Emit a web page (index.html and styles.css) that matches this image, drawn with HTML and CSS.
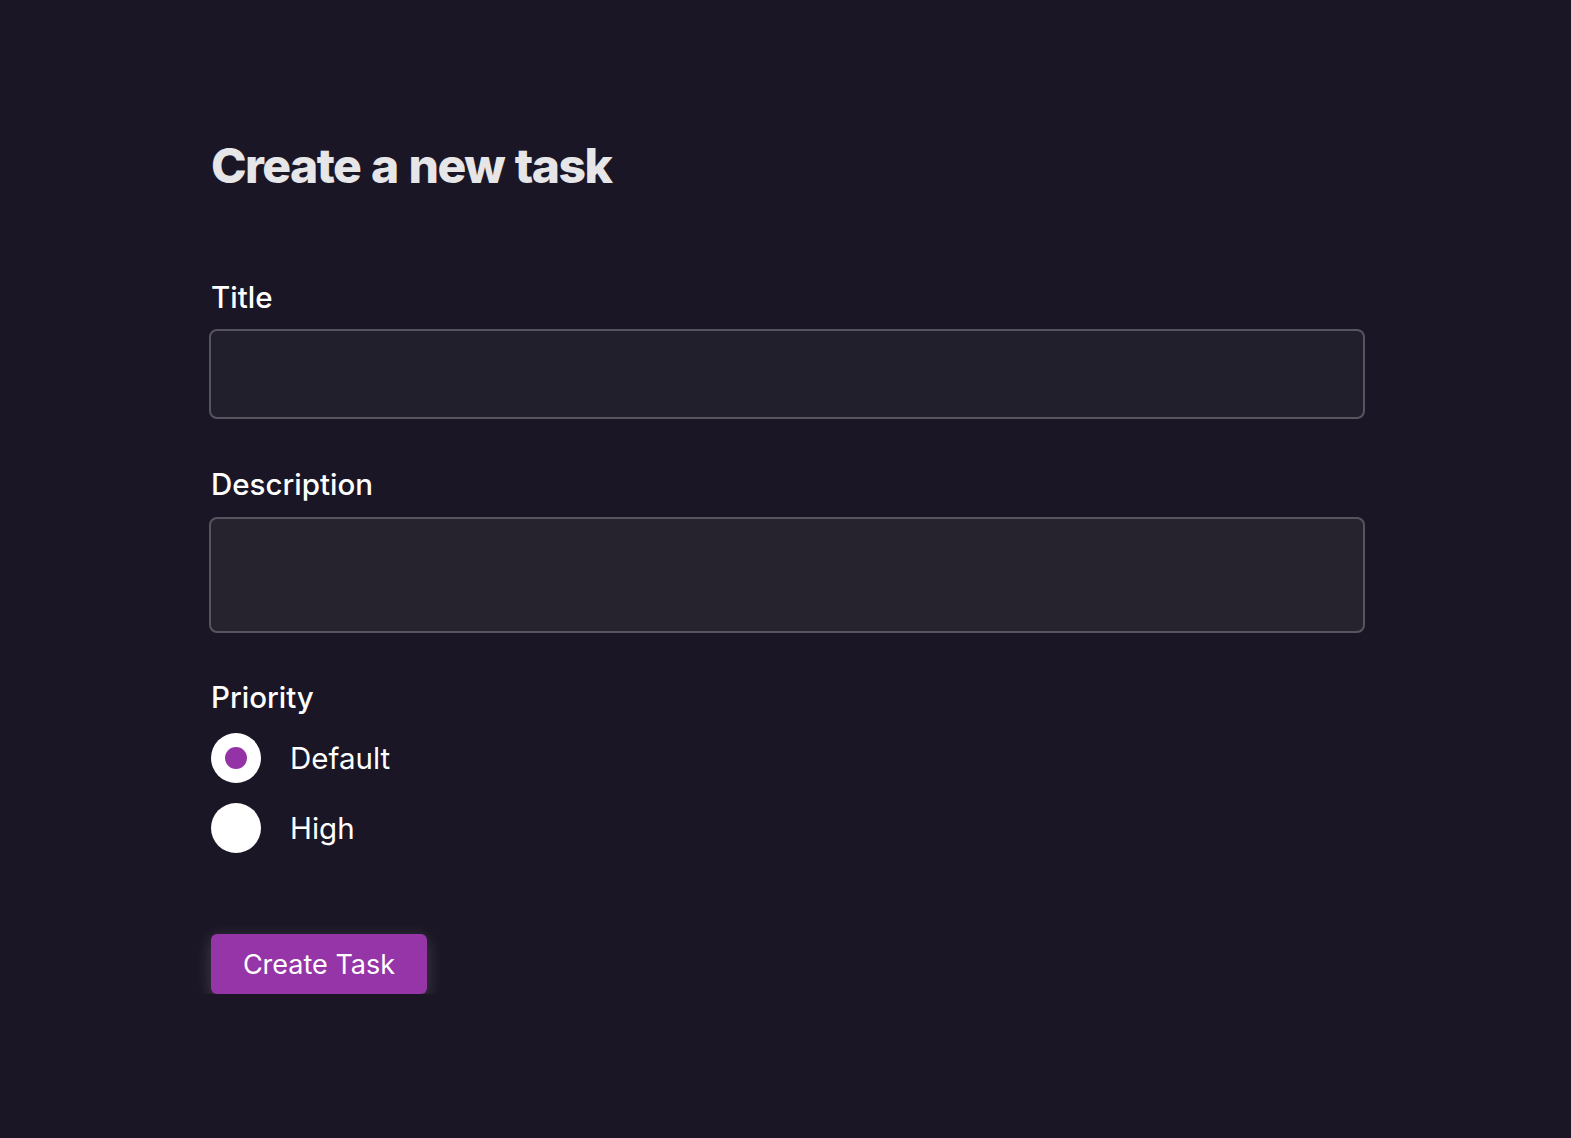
FILE: index.html
```html
<!DOCTYPE html>
<html lang="en">
<head>
<meta charset="utf-8">
<title>Create a new task</title>
<link rel="stylesheet" href="styles.css">
</head>
<body>
<main class="page">
  <form class="form">
    <h1 class="heading">Create a new task</h1>
    <label class="label label-title" for="title">Title</label>
    <input class="field field-title" id="title" type="text">
    <label class="label label-desc" for="desc">Description</label>
    <textarea class="field field-desc" id="desc"></textarea>
    <div class="label label-priority">Priority</div>
    <div class="radios">
      <label class="radio-row"><input class="radio" type="radio" name="priority" checked><span class="radio-text">Default</span></label>
      <label class="radio-row"><input class="radio" type="radio" name="priority"><span class="radio-text">High</span></label>
    </div>
    <button class="btn" type="button">Create Task</button>
  </form>
</main>
</body>
</html>
```
FILE: styles.css
```css
html, body {
  margin: 0;
  padding: 0;
  background: #1a1625;
  min-height: 100%;
}
body {
  font-family: Inter, "Noto Sans", sans-serif;
  color: #ffffff;
}
.page {
  padding: 137px 0 0 209px;
}
.form {
  width: 1156px;
  display: flex;
  flex-direction: column;
  align-items: flex-start;
}
.heading {
  margin: 0 0 0 2px;
  font-size: 48px;
  line-height: 58px;
  font-weight: 800;
  letter-spacing: -1.6px;
  word-spacing: 2px;
  color: #e6e6e8;
}
.label {
  display: block;
  margin-left: 2px;
  font-size: 29.5px;
  line-height: 36px;
  font-weight: 500;
  color: #ffffff;
}
.label-title { margin-top: 84px; }
.label-desc { margin-top: 47px; }
.label-priority { margin-top: 46px; }
.field {
  box-sizing: border-box;
  width: 100%;
  margin: 14px 0 0 0;
  border: 2px solid #57545f;
  border-radius: 8px;
  color: #fff;
  font-family: inherit;
  font-size: 28px;
  outline: none;
  padding: 0 16px;
}
.field-title {
  height: 90px;
  background: #221f2d;
}
.field-desc {
  height: 116px;
  margin-top: 15px;
  background: #26232f;
  resize: none;
  display: block;
}
.radios {
  margin: 18px 0 0 2px;
  display: flex;
  flex-direction: column;
  gap: 20px;
}
.radio-row {
  display: flex;
  align-items: center;
  gap: 29px;
  height: 50px;
}
.radio {
  appearance: none;
  -webkit-appearance: none;
  margin: 0;
  width: 50px;
  height: 50px;
  border-radius: 50%;
  background: #ffffff;
  display: flex;
  align-items: center;
  justify-content: center;
}
.radio:checked::after {
  content: "";
  width: 22px;
  height: 22px;
  border-radius: 50%;
  background: #9333a6;
}
.radio-text {
  font-size: 29.5px;
  line-height: 36px;
  font-weight: 400;
  color: #ffffff;
}
.btn {
  margin: 81px 0 0 2px;
  width: 216px;
  height: 60px;
  border: none;
  border-radius: 6px;
  background: #9535a8;
  color: #ffffff;
  font-family: inherit;
  font-size: 27px;
  font-weight: 400;
  box-shadow: 0 4px 16px rgba(255, 255, 255, 0.18);
  padding: 0;
}
```
